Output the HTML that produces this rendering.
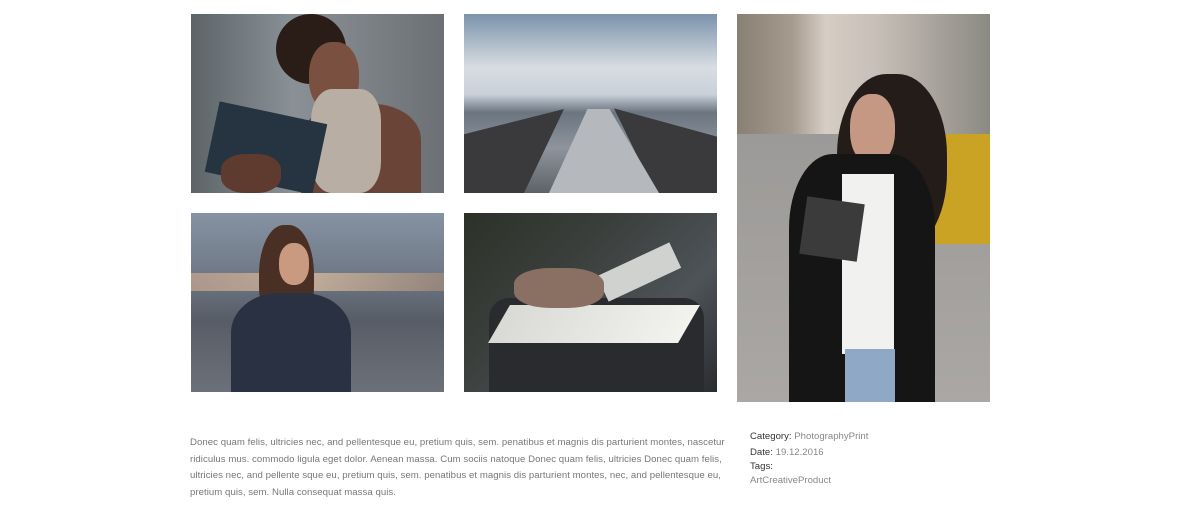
<!DOCTYPE html>
<html><head><style>
body{margin:0;width:1200px;height:508px;background:#fff;position:relative;overflow:hidden;font-family:"Liberation Sans",sans-serif}
.p{position:absolute;overflow:hidden}
.p div{position:absolute}
.t{position:absolute;font-size:9.6px;color:#777;line-height:16.7px;letter-spacing:0.05px}
.m{position:absolute;font-size:9.6px;line-height:15px;color:#888;left:750px}
.m b{font-weight:normal;color:#333}
</style></head><body>
<div class="p" style="left:191px;top:14px;width:253px;height:179px;background:linear-gradient(90deg,#5d6468 0%,#8a9196 40%,#6c7074 100%)">
 <div style="left:85px;top:0;width:70px;height:70px;border-radius:50%;background:#2a1d17"></div>
 <div style="left:118px;top:28px;width:50px;height:70px;border-radius:45%;background:#7a5040"></div>
 <div style="left:110px;top:90px;width:120px;height:89px;border-radius:40% 40% 0 0;background:#6b4438"></div>
 <div style="left:120px;top:75px;width:70px;height:104px;background:#b8aea4;border-radius:30%"></div>
 <div style="left:20px;top:98px;width:110px;height:72px;background:#263340;transform:rotate(12deg)"></div>
 <div style="left:30px;top:140px;width:60px;height:39px;background:#5e3b2e;border-radius:40%"></div>
</div>
<div class="p" style="left:464px;top:14px;width:253px;height:179px;background:linear-gradient(180deg,#7b93ab 0%,#d8dde2 30%,#c8d0d9 45%,#6b7580 55%,#8d949c 75%,#5e6268 100%)">
 <div style="left:0;top:95px;width:100px;height:84px;background:#3a3a3c;clip-path:polygon(0 30%,100% 0,60% 100%,0 100%)"></div>
 <div style="left:150px;top:85px;width:103px;height:94px;background:#3a3a3c;clip-path:polygon(0 10%,100% 40%,100% 100%,40% 100%)"></div>
 <div style="left:85px;top:95px;width:110px;height:84px;background:#b5b9be;clip-path:polygon(35% 0,55% 0,100% 100%,0 100%)"></div>
</div>
<div class="p" style="left:191px;top:213px;width:253px;height:179px;background:linear-gradient(180deg,#8693a3 0%,#6f7886 35%,#575d66 60%,#6c7079 100%)">
 <div style="left:0;top:60px;width:253px;height:18px;background:linear-gradient(90deg,#c9a890,#e0c0a0,#a58c7c);opacity:.7"></div>
 <div style="left:68px;top:12px;width:55px;height:110px;border-radius:45%;background:#4a2f25"></div>
 <div style="left:88px;top:30px;width:30px;height:42px;border-radius:45%;background:#c99a80"></div>
 <div style="left:40px;top:80px;width:120px;height:99px;border-radius:40% 40% 0 0;background:#2a3142"></div>
</div>
<div class="p" style="left:464px;top:213px;width:253px;height:179px;background:linear-gradient(135deg,#2c3128 0%,#3d413f 40%,#4e5358 70%,#2a2c30 100%)">
 <div style="left:25px;top:85px;width:215px;height:94px;background:#2a2b2e;border-radius:20px 20px 0 0"></div>
 <div style="left:35px;top:92px;width:190px;height:38px;background:linear-gradient(90deg,#d9d9d6,#f2f2ef);transform:skewX(-30deg)"></div>
 <div style="left:135px;top:45px;width:80px;height:28px;background:#cfd2cf;transform:rotate(-25deg)"></div>
 <div style="left:50px;top:55px;width:90px;height:40px;background:#8a6f63;border-radius:40%"></div>
</div>
<div class="p" style="left:737px;top:14px;width:253px;height:388px;background:linear-gradient(90deg,#8a7f73 0%,#a69b8f 22%,#d6cdc4 35%,#c7bfb8 55%,#8b8a82 100%)">
 <div style="left:0;top:120px;width:253px;height:268px;background:linear-gradient(180deg,#9c9a98,#aaa7a4)"></div>
 <div style="left:188px;top:120px;width:65px;height:110px;background:#caa224;border-radius:30% 0 0 20%"></div>
 <div style="left:100px;top:60px;width:110px;height:180px;border-radius:45%;background:#241c18"></div>
 <div style="left:113px;top:80px;width:45px;height:70px;border-radius:45%;background:#c59884"></div>
 <div style="left:52px;top:140px;width:146px;height:248px;background:#151515;border-radius:30% 30% 0 0"></div>
 <div style="left:105px;top:160px;width:52px;height:180px;background:#f1f1ef"></div>
 <div style="left:108px;top:335px;width:50px;height:53px;background:#8fa8c5"></div>
 <div style="left:66px;top:186px;width:58px;height:58px;background:#3b3b3c;transform:rotate(8deg)"></div>
</div>

<div class="t" style="left:190px;top:435px;width:560px">Donec quam felis, ultricies nec, and pellentesque eu, pretium quis, sem. penatibus et magnis dis parturient montes, nascetur ridiculus mus. commodo ligula eget dolor. Aenean massa. Cum sociis natoque Donec quam felis, ultricies Donec quam felis, ultricies nec, and pellente sque eu, pretium quis, sem. penatibus et magnis dis parturient montes, nec, and pellentesque eu, pretium quis, sem. Nulla consequat massa quis.</div>
<div class="m" style="top:429px"><b>Category:</b> PhotographyPrint</div>
<div class="m" style="top:445px"><b>Date:</b> 19.12.2016</div>
<div class="m" style="top:459px"><b>Tags:</b></div>
<div class="m" style="top:473px">ArtCreativeProduct</div>
</body></html>
